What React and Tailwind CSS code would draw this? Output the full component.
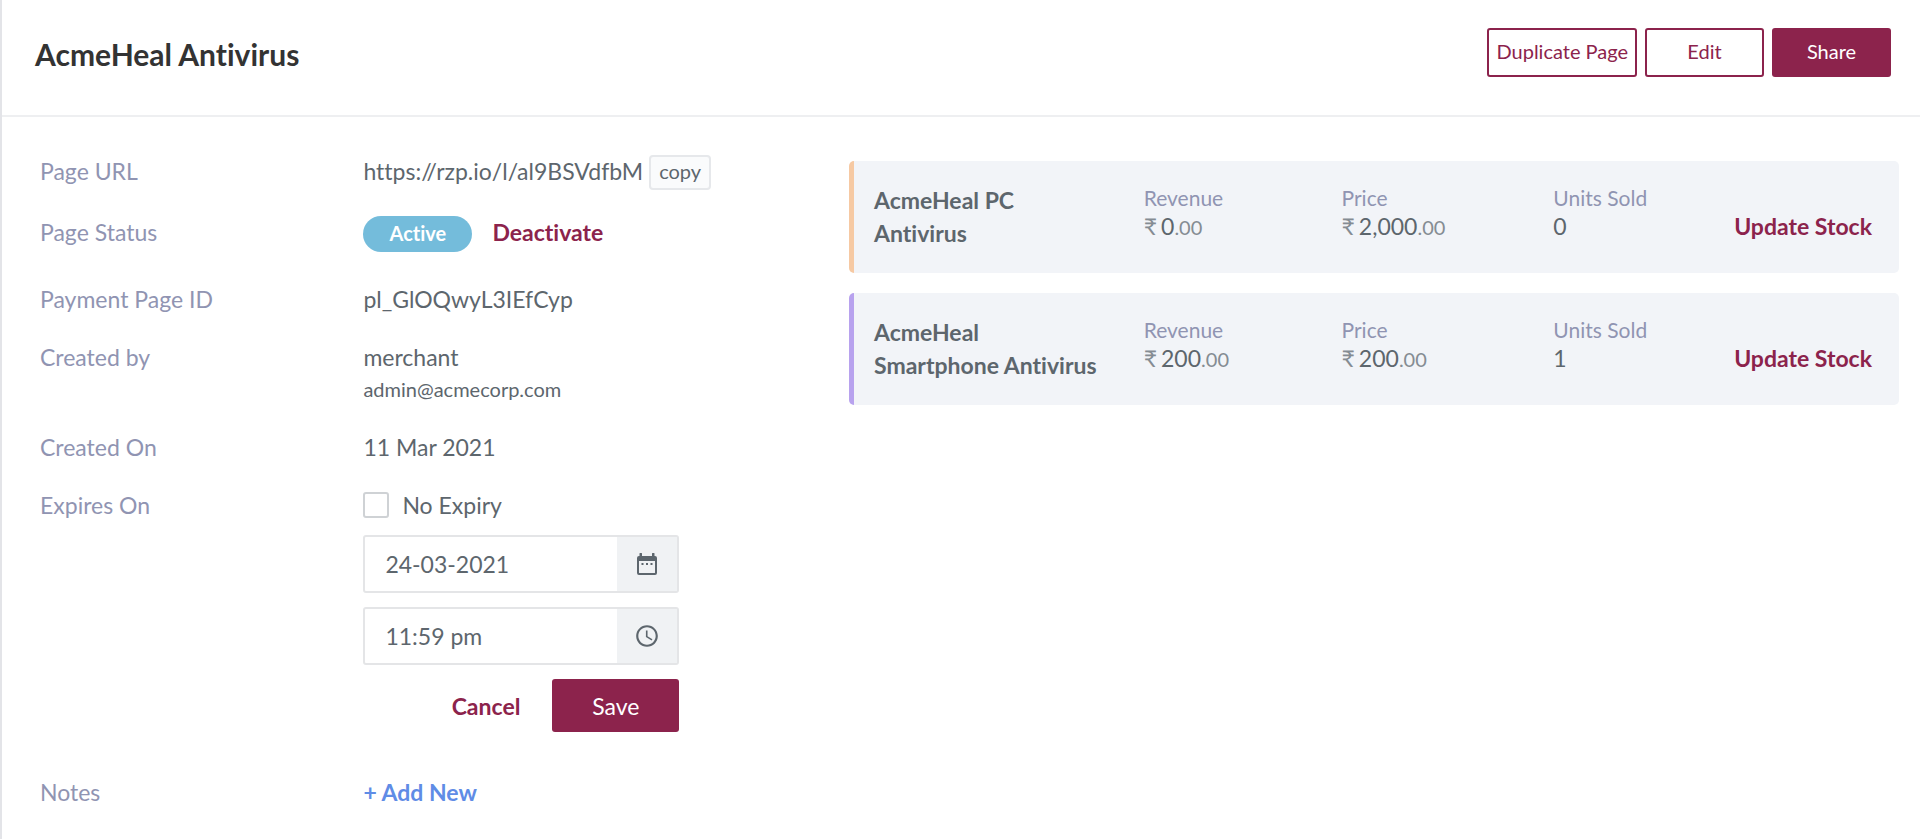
import React from 'react';
import { MdAccessTime } from 'react-icons/md';

const products = [
  {
    name: 'AcmeHeal PC Antivirus',
    revenue: '0',
    price: '2,000',
    sold: 0,
    accent: 'border-[#f6c9a3]',
  },
  {
    name: 'AcmeHeal Smartphone Antivirus',
    revenue: '200',
    price: '200',
    sold: 1,
    accent: 'border-[#b8a2ee]',
  },
];

const CalendarIcon = ({ className }) => (
  <svg viewBox="0 0 26 26" fill="currentColor" className={className} aria-hidden="true">
    <path
      fillRule="evenodd"
      d="M6 2h1.5a.5.5 0 0 1 .5.5V5h10V2.500a.5.500 0 0 1 .5-.5H20a.5.5 0 0 1 .5.5V5H21a2 2 0 0 1 2 2v15a2 2 0 0 1-2 2H5a2 2 0 0 1-2-2V7a2 2 0 0 1 2-2h.5V2.500A.5.5 0 0 1 6 2zM5 10v11.500a.5.5 0 0 0 .5.5h15a.5.5 0 0 0 .5-.5V10z"
    />
    <path d="M7.500 12h2v2h-2zM12 12h2v2h-2zM16.500 12h2v2h-2z" />
  </svg>
);

const Row = ({ label, className = '', children }) => (
  <div className={`grid grid-cols-[323fr_485fr] ${className}`}>
    <dt className="text-[#9094b2]">{label}</dt>
    <dd>{children}</dd>
  </div>
);

const Amount = ({ value }) => (
  <>
    <span className="mr-1 text-[#858c93]">₹</span>
    {value}
    <span className="text-xl text-[#858c93]">.00</span>
  </>
);

const Field = ({ label, children }) => (
  <div>
    <dt className="text-[21px] leading-7 text-[#9094b2]">{label}</dt>
    <dd className="leading-[29px]">{children}</dd>
  </div>
);

const PickerInput = ({ label, value, icon: Icon }) => (
  <div className="flex h-[58px] rounded-[3px] border-2 border-[#e4e5e7]">
    <input
      type="text"
      aria-label={label}
      defaultValue={value}
      className="min-w-0 flex-1 px-5 outline-none"
    />
    <button
      type="button"
      aria-label={`Choose ${label.toLowerCase()}`}
      className="flex w-[60px] items-center justify-center bg-[#f0f2f4]"
    >
      <Icon className="size-[26px]" />
    </button>
  </div>
);

const ProductCard = ({ product }) => (
  <article
    className={`flex items-start justify-between rounded-[5px] border-l-[5px] bg-[#f2f4f8] py-[23px] pl-5 pr-[27px] ${product.accent}`}
  >
    <div className="grid flex-1 grid-cols-[270fr_198fr_212fr_181fr] items-start">
      <h2 className="pr-9 font-bold leading-[33px]">{product.name}</h2>
      <dl className="contents">
        <Field label="Revenue">
          <Amount value={product.revenue} />
        </Field>
        <Field label="Price">
          <Amount value={product.price} />
        </Field>
        <Field label="Units Sold">{product.sold}</Field>
      </dl>
    </div>
    <button type="button" className="mt-[26px] font-bold text-[#8c234c]">
      Update Stock
    </button>
  </article>
);

export default function App() {
  return (
    <div className="min-h-screen border-l-2 border-[#e3e4e8] bg-white font-[Lato,sans-serif] text-[23px] leading-8 text-[#5d666d] [font-variant-ligatures:none]">
      <header className="flex items-start justify-between border-b-2 border-[#eeeff1] pb-[38px] pl-[33px] pr-[29px] pt-7">
        <h1 className="pt-1.5 text-[30px] font-bold leading-10 text-[#333333]">AcmeHeal Antivirus</h1>
        <div className="flex gap-2 text-xl">
          <button type="button" className="h-[49px] rounded-[3px] border-2 border-[#8c234c] px-[7px] pb-1 text-[#8c234c]">
            Duplicate Page
          </button>
          <button type="button" className="h-[49px] w-[119px] rounded-[3px] border-2 border-[#8c234c] pb-1 text-[#8c234c]">
            Edit
          </button>
          <button type="button" className="h-[49px] w-[119px] rounded-[3px] bg-[#8c234c] pb-1 text-white">
            Share
          </button>
        </div>
      </header>

      <main className="grid grid-cols-[847fr_1050fr] items-start pr-[21px]">
        <dl className="flex flex-col gap-[26px] pl-[38px] pt-[38px]">
          <Row label="Page URL">
            <div className="flex items-start gap-1.5">
              https://rzp.io/l/al9BSVdfbM
              <button
                type="button"
                className="h-[35px] rounded-[4px] border-2 border-[#e6e8eb] bg-[#fafbfc] px-2 pb-1 text-xl leading-7"
              >
                copy
              </button>
            </div>
          </Row>

          <Row label="Page Status" className="pb-[5px]">
            <div className="flex items-start gap-5">
              <span className="flex h-9 w-[109px] items-center justify-center rounded-full bg-[#74bcdb] pb-0.5 text-xl font-bold text-white">
                Active
              </span>
              <button type="button" className="font-bold text-[#8c234c]">
                Deactivate
              </button>
            </div>
          </Row>

          <Row label="Payment Page ID">pl_GlOQwyL3IEfCyp</Row>

          <Row label="Created by">
            <div>merchant</div>
            <div className="text-xl leading-8">admin@acmecorp.com</div>
          </Row>

          <Row label="Created On">11 Mar 2021</Row>

          <Row label="Expires On" className="pb-[18px]">
            <div className="flex w-[316px] flex-col gap-[14px]">
              <label className="flex items-center gap-[13px]">
                <input
                  type="checkbox"
                  className="size-[26px] appearance-none rounded-[3px] border-2 border-[#cfd2d5] bg-white checked:bg-[#8c234c]"
                />
                No Expiry
              </label>
              <PickerInput label="Expiry date" value="24-03-2021" icon={CalendarIcon} />
              <PickerInput label="Expiry time" value="11:59 pm" icon={MdAccessTime} />
              <div className="flex items-center justify-end gap-8">
                <button type="button" className="font-bold text-[#8c234c]">
                  Cancel
                </button>
                <button type="button" className="h-[53px] w-[127px] rounded-[3px] bg-[#8c234c] text-white">
                  Save
                </button>
              </div>
            </div>
          </Row>

          <Row label="Notes">
            <button type="button" className="font-bold text-[#5f8ce6]">
              + Add New
            </button>
          </Row>
        </dl>

        <section aria-label="Products" className="flex flex-col gap-5 pt-11">
          {products.map((product) => (
            <ProductCard key={product.name} product={product} />
          ))}
        </section>
      </main>
    </div>
  );
}
